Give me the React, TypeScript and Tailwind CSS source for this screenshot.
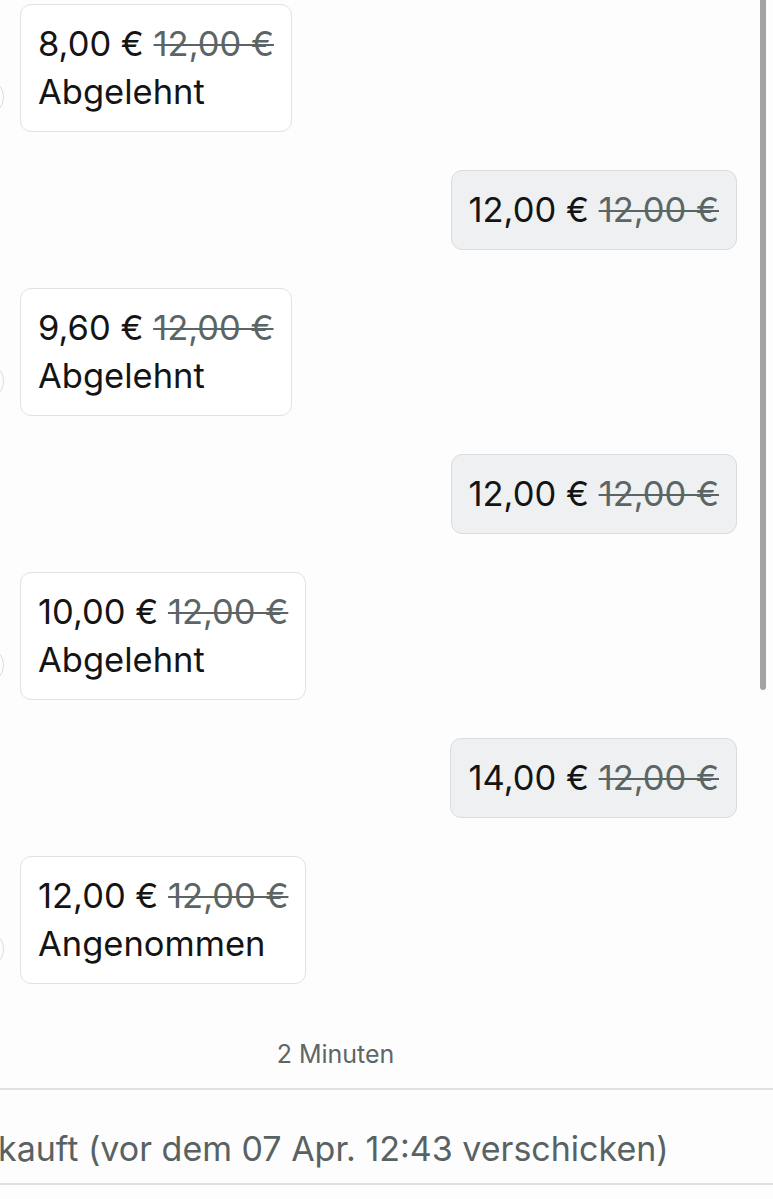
import React from "react";

type Msg = { side: "l" | "r"; price: string; status?: string };

const msgs: Msg[] = [
  { side: "l", price: "8,00 €", status: "Abgelehnt" },
  { side: "r", price: "12,00 €" },
  { side: "l", price: "9,60 €", status: "Abgelehnt" },
  { side: "r", price: "12,00 €" },
  { side: "l", price: "10,00 €", status: "Abgelehnt" },
  { side: "r", price: "14,00 €" },
  { side: "l", price: "12,00 €", status: "Angenommen" },
];

function Bubble({ m }: { m: Msg }) {
  const left = m.side === "l";
  return (
    <div className={left ? "relative flex justify-start pl-[20px]" : "flex justify-end pr-[36px]"}>
      {left && (
        <div className="absolute left-[-34px] bottom-[16px] w-[38px] h-[38px] rounded-full border-[1.5px] border-[#dcdcdc]" />
      )}
      <div
        className={
          "rounded-[11px] border-[1.5px] px-[17px] py-[15px] text-[34.5px] leading-[48px] text-[#141414] " +
          (left ? "bg-white border-[#e2e2e2]" : "bg-[#eef0f1] border-[#dadddf]")
        }
      >
        <div className="whitespace-nowrap">
          {m.price} <span className="line-through decoration-[2px] text-[#5b6565]">12,00 €</span>
        </div>
        {m.status && <div className="whitespace-nowrap">{m.status}</div>}
      </div>
    </div>
  );
}

export default function App() {
  return (
    <div
      className="relative w-[773px] h-[1199px] overflow-hidden bg-[#fdfdfd]"
      style={{ fontFamily: "Inter, 'Noto Sans', sans-serif" }}
    >
      <div className="absolute right-[7px] top-0 w-[6px] h-[690px] rounded-b-full bg-[#a3a3a3]" />
      <div className="flex flex-col gap-[38px] pt-[4px]">
        {msgs.map((m, i) => (
          <Bubble key={i} m={m} />
        ))}
      </div>
      <div className="mt-[56px] pr-[102px] text-center text-[25px] leading-[28px] text-[#5f6666]">
        2 Minuten
      </div>
      <div className="mt-[20px] border-t-[2px] border-[#e0e0e0]" />
      <div className="h-[93px] pt-[24px] flex items-center whitespace-nowrap text-[34px] text-[#586262] ml-[-2px]">
        kauft (vor dem 07 Apr. 12:43 verschicken)
      </div>
      <div className="border-t-[2px] border-[#e0e0e0]" />
    </div>
  );
}
